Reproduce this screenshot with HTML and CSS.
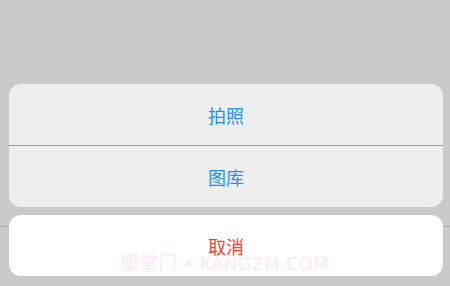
FILE: index.html
```html
<!DOCTYPE html>
<html lang="zh-CN">
<head>
<meta charset="utf-8">
<title>操作菜单</title>
<link rel="stylesheet" href="styles.css">
</head>
<body>
<div class="screen">
  <div class="page-line"></div>
  <div class="sheet">
    <div class="group">
      <div class="item">拍照</div>
      <div class="divider"></div>
      <div class="item">图库</div>
    </div>
    <div class="cancel">
      <div class="item item-cancel">取消</div>
    </div>
  </div>
  <div class="watermark"><span class="wm-cn">康掌门</span> • KANGZM.COM</div>
</div>
</body>
</html>
```
FILE: styles.css
```css
html, body {
  margin: 0;
  padding: 0;
}
body {
  width: 450px;
  height: 286px;
  overflow: hidden;
  background: #c9c9c9;
  font-family: "Noto Sans CJK SC", "Noto Sans", sans-serif;
}
.screen {
  position: relative;
  width: 450px;
  height: 286px;
  display: flex;
  flex-direction: column;
  justify-content: flex-end;
}
.page-line {
  position: absolute;
  left: 0;
  right: 0;
  top: 226px;
  height: 1px;
  background: #a9a9a9;
}
.sheet {
  position: relative;
  display: flex;
  flex-direction: column;
  gap: 8px;
  padding: 0 7px 10px 9px;
}
.group {
  background: #eeeeee;
  border-radius: 12px;
  overflow: hidden;
}
.cancel {
  background: #ffffff;
  border-radius: 12px;
  overflow: hidden;
}
.item {
  height: 61px;
  display: flex;
  align-items: center;
  justify-content: center;
  font-size: 18px;
  color: #2391f3;
}
.item-cancel {
  color: #fc4038;
}
.divider {
  height: 1px;
  background: #9b9b9b;
}
.watermark {
  position: absolute;
  left: 120px;
  top: 253px;
  font-family: "DejaVu Sans", "Noto Sans CJK SC", sans-serif;
  font-size: 18px;
  line-height: 20px;
  letter-spacing: 0.2px;
  color: #fce8f9;
  white-space: nowrap;
}
.wm-cn {
  font-size: 19px;
  letter-spacing: 0;
}
```
